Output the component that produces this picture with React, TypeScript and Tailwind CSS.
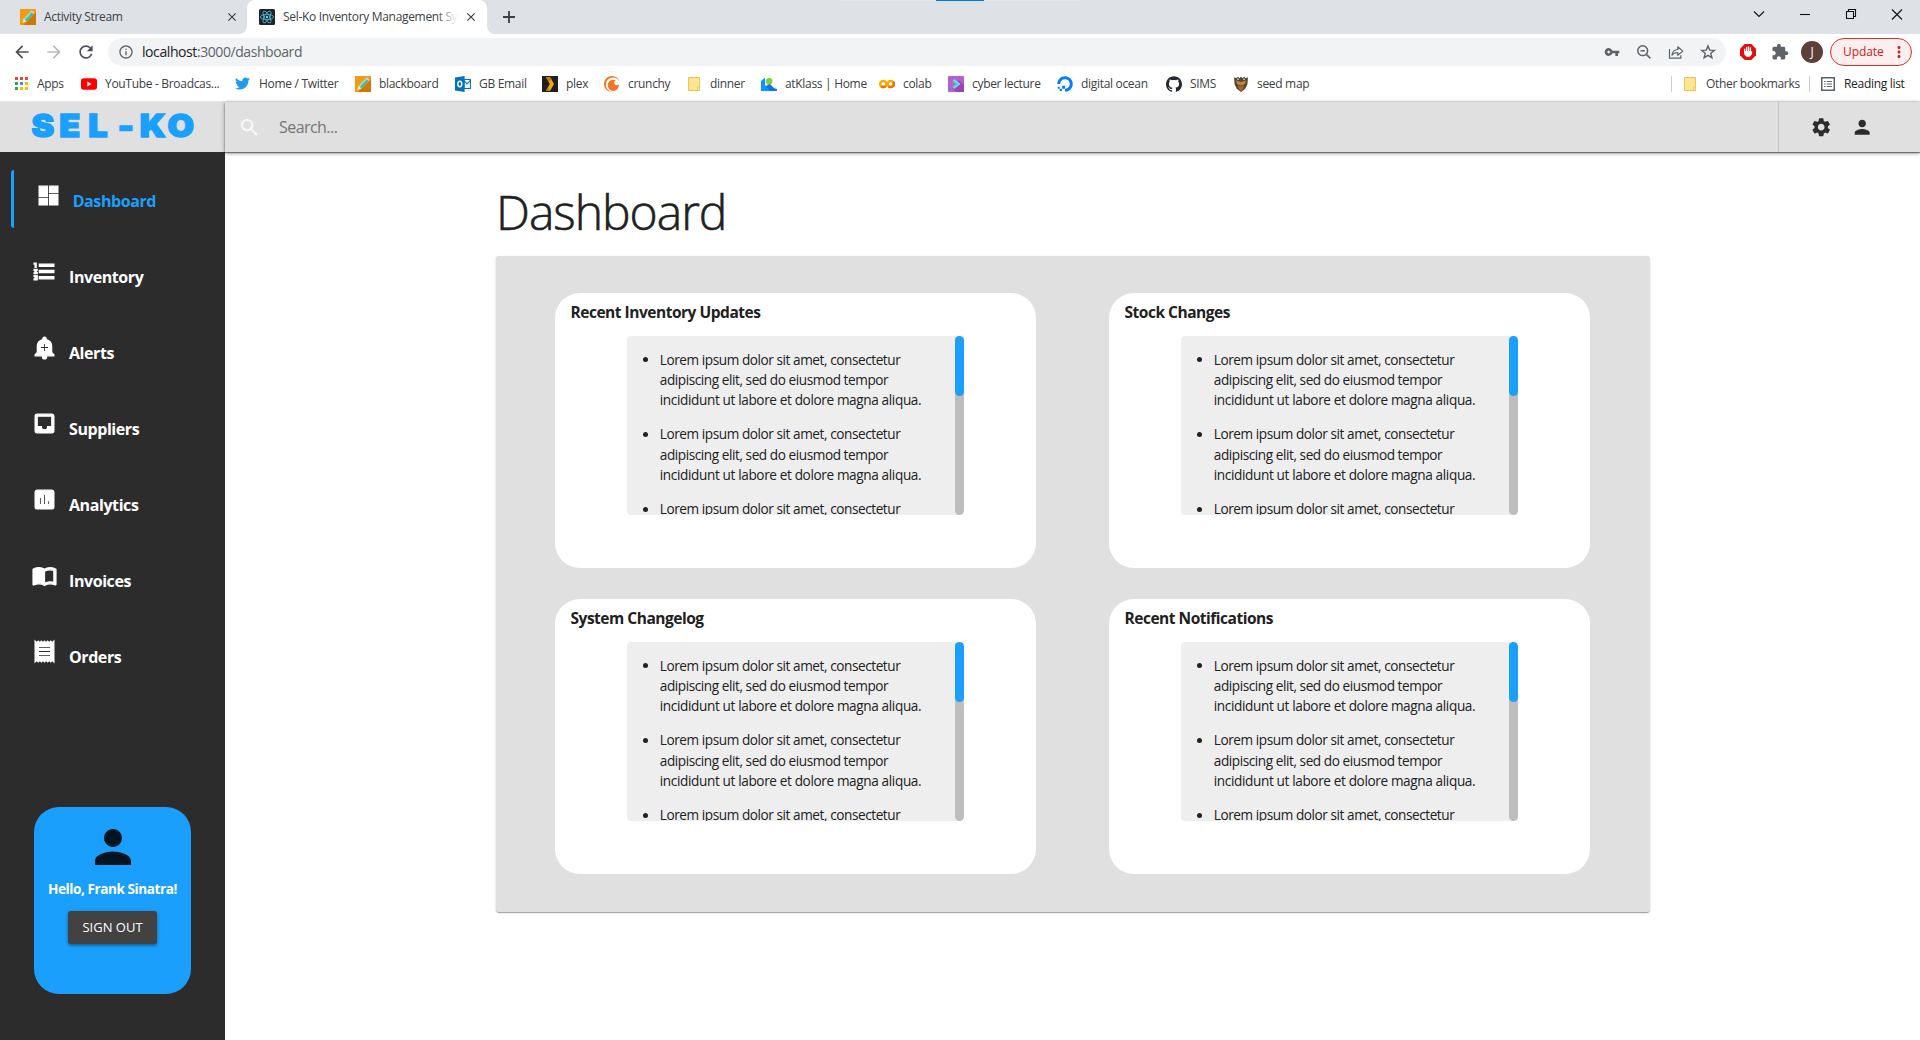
import React from "react";
import {
  MdAddAlert,
  MdArrowBack,
  MdArrowForward,
  MdAssessment,
  MdClose,
  MdDashboard,
  MdExtension,
  MdFormatListNumbered,
  MdImportContacts,
  MdInbox,
  MdInfoOutline,
  MdMoreVert,
  MdPerson,
  MdReceipt,
  MdRefresh,
  MdSearch,
  MdSettings,
  MdVpnKey,
} from "react-icons/md";
import { FaDigitalOcean, FaTwitter } from "react-icons/fa";
import { SiCrunchyroll, SiGithub } from "react-icons/si";

function PencilIcon() {
  return (
    <svg width="16" height="16" viewBox="0 0 16 16">
      <rect width="16" height="16" fill="#f79a12" />
      <path d="M16 3v13H3z" fill="#cf7a04" />
      <path d="M10.6 2.2l3 2.9-7.2 7.5-2.9-2.9z" fill="#7fe3cf" />
      <path d="M12 3.6l-7 7.5 1.4 1.5 7.2-7.5z" fill="#3fb9ae" />
      <path d="M10.6 2.2l1-1 3 2.9-1 1z" fill="#f3c3dc" />
      <path d="M3.5 9.7l2.9 2.9L2.3 14z" fill="#fdeecb" />
    </svg>
  );
}

function ReactIcon() {
  return (
    <svg width="16" height="16" viewBox="0 0 16 16">
      <rect width="16" height="16" rx="1.5" fill="#20232a" />
      <g fill="none" stroke="#61dafb" strokeWidth="0.8" opacity="0.85">
        <ellipse cx="8" cy="8" rx="6.6" ry="2.6" />
        <ellipse cx="8" cy="8" rx="6.6" ry="2.6" transform="rotate(60 8 8)" />
        <ellipse cx="8" cy="8" rx="6.6" ry="2.6" transform="rotate(120 8 8)" />
      </g>
      <circle cx="8" cy="8" r="1.2" fill="#61dafb" />
    </svg>
  );
}

function AppsIcon() {
  const colors = ["#ea4335", "#ea4335", "#ea4335", "#34a853", "#4285f4", "#fbbc04", "#34a853", "#fbbc04", "#fbbc04"];
  return (
    <svg width="13" height="13" viewBox="0 0 13 13" className="ml-[2px]">
      {colors.map((c, i) => (
        <rect key={i} x={(i % 3) * 5} y={Math.floor(i / 3) * 5} width="3" height="3" fill={c} />
      ))}
    </svg>
  );
}

function YoutubeIcon() {
  return (
    <svg width="16" height="16" viewBox="0 0 16 16">
      <rect y="2.2" width="16" height="11.6" rx="2.8" fill="#f00" />
      <path d="M6.3 5.6v4.8L10.6 8z" fill="#fff" />
    </svg>
  );
}

function OutlookIcon() {
  return (
    <svg width="16" height="16" viewBox="0 0 16 16">
      <path d="M9 3.5h6.4v9H9z" fill="#fff" stroke="#0072c6" strokeWidth="1.1" />
      <path d="M9 4.5l3 3.4 3.4-3.6" fill="none" stroke="#0072c6" strokeWidth="1.1" />
      <path d="M0 1.5L9.6 0v16L0 14.5z" fill="#0072c6" />
      <ellipse cx="4.8" cy="8" rx="2" ry="2.7" fill="none" stroke="#fff" strokeWidth="1.4" />
    </svg>
  );
}

function PlexIcon() {
  return (
    <svg width="16" height="16" viewBox="0 0 16 16">
      <rect width="16" height="16" fill="#1f1f1f" />
      <path d="M4 1.3h4.2L12 8l-3.8 6.7H4L7.8 8z" fill="#f0a810" />
      <path d="M4 1.3h4.2L9.6 3.8 6.4 5.6zM4 14.7L6 11.2l2.2 3.5z" fill="#c4770d" />
    </svg>
  );
}

function FolderIcon() {
  return (
    <svg width="16" height="16" viewBox="0 0 16 16">
      <path d="M2.5 1.5h11v13h-11z" fill="#ffe593" stroke="#e9c64f" />
      <path d="M11.5 11h2v3.5h-2z" fill="#ffe593" stroke="#e9c64f" strokeWidth="0.8" />
    </svg>
  );
}

function KlassIcon() {
  return (
    <svg width="16" height="16" viewBox="0 0 16 16">
      <path d="M0 5L4 1.5v8L16 13v2H0z" fill="#0a96ff" />
      <path d="M5 10l3.5-2.5L16 15H9z" fill="#1273e6" />
      <circle cx="8.2" cy="5.2" r="3.2" fill="#7ed037" />
    </svg>
  );
}

function ColabIcon() {
  return (
    <svg width="16" height="16" viewBox="0 0 16 16" fill="none" strokeWidth="2.5">
      <circle cx="4.3" cy="8" r="3.1" stroke="#f9ab00" />
      <path d="M2.1 10.2A3.1 3.1 0 0 0 6.5 10.2" stroke="#e8710a" />
      <circle cx="11.7" cy="8" r="3.1" stroke="#f9ab00" />
      <path d="M13.9 5.8A3.1 3.1 0 0 1 9.5 10.2" stroke="#e8710a" />
    </svg>
  );
}

function CyberIcon() {
  return (
    <svg width="16" height="16" viewBox="0 0 16 16">
      <rect width="16" height="16" rx="1" fill="#b65fd0" />
      <path d="M11 4l5 5v7H8l-3.5-3.5z" fill="#9a44b5" />
      <path d="M5.5 3.7L11 8l-5.5 4.3" fill="none" stroke="#5fe0ff" strokeWidth="2" />
      <path d="M5 5.5L8.5 8 5 10.5" fill="none" stroke="#50e070" strokeWidth="1.2" />
    </svg>
  );
}

function SeedIcon() {
  return (
    <svg width="16" height="16" viewBox="0 0 16 16">
      <path
        d="M1 1.5l2.500.5L5 .8l1.500 1.400L8 .5l1.500 1.700L11 .8l1.500 1.200 2.500-.5-.6 7L12 13l-4 3-4-3L1.600 8.500z"
        fill="#54483a"
      />
      <path d="M3 4.5l5 1.5 5-1.5-1 3.500L8 9.500 4 8z" fill="#c98236" />
      <path d="M5 9L8 10.500 11 9 10 13 8 15l-2-2z" fill="#a8682a" />
      <circle cx="5" cy="3.2" r=".9" fill="#b9c3c9" />
      <circle cx="11" cy="3.2" r=".9" fill="#b9c3c9" />
    </svg>
  );
}

function ReadingListIcon() {
  return (
    <svg width="14" height="14" viewBox="0 0 14 14" fill="none" stroke="#5f6368">
      <rect x=".75" y=".75" width="12.5" height="12.5" strokeWidth="1.5" />
      <path d="M3 4.500h1.600M3 7h1.600M3 9.500h1.600M5.700 4.500H11M5.700 7H11M5.700 9.500H11" strokeWidth="1.2" />
    </svg>
  );
}

function ZoomOutIcon() {
  return (
    <svg width="16" height="16" viewBox="0 0 16 16" fill="none" stroke="#5f6368" strokeWidth="1.5">
      <circle cx="6.7" cy="6.7" r="4.9" />
      <path d="M10.400 10.400l4 4M4.500 6.700h4.400" />
    </svg>
  );
}

function ShareIcon() {
  return (
    <svg width="16" height="16" viewBox="0 0 16 16" fill="none" stroke="#5f6368" strokeWidth="1.2">
      <path d="M1.500 5v9.200h11.300v-3" />
      <path
        d="M4 11.200c.3-3.600 2.200-5.500 5.800-5.700V2.800l5 4.300-5 4.200V8.700C7 8.600 5.300 9.400 4 11.200z"
        strokeLinejoin="round"
      />
    </svg>
  );
}

function StarIcon() {
  return (
    <svg width="16" height="16" viewBox="0 0 16 16" fill="none" stroke="#5f6368" strokeWidth="1.4">
      <path d="M8 1.900l1.700 4.200 4.600.3-3.500 2.900 1.100 4.400L8 11.300l-3.900 2.400 1.100-4.400L1.700 6.400l4.600-.3z" />
    </svg>
  );
}

function BlockerIcon() {
  return (
    <svg width="16" height="16" viewBox="0 0 16 16">
      <path d="M4.700 0h6.600L16 4.700v6.600L11.300 16H4.700L0 11.300V4.700z" fill="#e40d0d" />
      <path
        d="M4.700 7.800V5.200M6.600 7V3.400M8.500 7V2.900M10.400 7V3.800"
        stroke="#fff"
        strokeWidth="1.3"
        strokeLinecap="round"
      />
      <path d="M4.050 7H11l1.300.8c-.2 2.700-1.300 5-3.900 5.200-2.700 0-4.350-2-4.350-4.500z" fill="#fff" />
    </svg>
  );
}

const bookmarks = [
  { label: "Apps", width: "w-[68px]", icon: <AppsIcon /> },
  { label: "YouTube - Broadcas...", width: "w-[154px]", icon: <YoutubeIcon /> },
  { label: "Home / Twitter", width: "w-[120px]", icon: <FaTwitter size={15} color="#1d9bf0" /> },
  { label: "blackboard", width: "w-[100px]", icon: <PencilIcon /> },
  { label: "GB Email", width: "w-[87px]", icon: <OutlookIcon /> },
  { label: "plex", width: "w-[62px]", icon: <PlexIcon /> },
  { label: "crunchy", width: "w-[82px]", icon: <SiCrunchyroll size={16} color="#f47521" /> },
  { label: "dinner", width: "w-[75px]", icon: <FolderIcon /> },
  { label: "atKlass | Home", width: "w-[118px]", icon: <KlassIcon /> },
  { label: "colab", width: "w-[69px]", icon: <ColabIcon /> },
  { label: "cyber lecture", width: "w-[109px]", icon: <CyberIcon /> },
  { label: "digital ocean", width: "w-[109px]", icon: <FaDigitalOcean size={16} color="#0080ff" /> },
  { label: "SIMS", width: "w-[67px]", icon: <SiGithub size={16} color="#24292f" /> },
  { label: "seed map", width: "w-[100px]", icon: <SeedIcon /> },
];

const navItems = [
  { label: "Inventory", Icon: MdFormatListNumbered },
  { label: "Alerts", Icon: MdAddAlert },
  { label: "Suppliers", Icon: MdInbox },
  { label: "Analytics", Icon: MdAssessment },
  { label: "Invoices", Icon: MdImportContacts },
  { label: "Orders", Icon: MdReceipt },
];

function TabStrip() {
  return (
    <div className="relative flex h-[34px] bg-[#dee1e6] text-[12px] tracking-[-0.32px] text-[#3c4043]">
      <div className="absolute left-[840px] top-0 h-px w-[240px] bg-[#e5e5e5]" />
      <div className="absolute left-[936px] top-0 h-px w-[48px] bg-[#0078d7]" />
      <div className="flex w-[247px] items-center pl-[20px]">
        <PencilIcon />
        <span className="ml-[8px] w-[181px]">Activity Stream</span>
        <MdClose size={14} />
      </div>
      <div className="relative flex w-[240px] items-center rounded-t-[8px] bg-white pl-[12px]">
        <svg className="absolute -left-[8px] bottom-0" width="8" height="8">
          <path d="M8 0v8H0a8 8 0 0 0 8-8z" fill="#fff" />
        </svg>
        <svg className="absolute -right-[8px] bottom-0" width="8" height="8">
          <path d="M0 0v8h8a8 8 0 0 1-8-8z" fill="#fff" />
        </svg>
        <ReactIcon />
        <div className="relative ml-[8px] w-[175px] overflow-hidden whitespace-nowrap">
          Sel-Ko Inventory Management Sy
          <div className="absolute inset-y-0 right-0 w-[20px] bg-linear-to-r from-white/10 to-white" />
        </div>
        <MdClose size={14} className="ml-[6px]" />
      </div>
      <svg className="ml-[16px] mt-[11px]" width="12" height="12" viewBox="0 0 12 12">
        <path d="M6 0v12M0 6h12" stroke="#3c4043" strokeWidth="1.8" />
      </svg>
      <svg
        className="ml-auto"
        width="172"
        height="28"
        viewBox="0 0 172 28"
        fill="none"
        stroke="#111"
        strokeWidth="1.1"
      >
        <path d="M6 11.500l5 5 5-5" />
        <path d="M52 14.500h10" />
        <path d="M98.500 11.500h7v7h-7zM100.500 11.500v-2h7v7h-2" />
        <path d="M144 9.500l10 10M154 9.500l-10 10" />
      </svg>
    </div>
  );
}

function Toolbar() {
  return (
    <div className="flex h-[36px] items-center bg-white">
      <div className="flex w-[108px] items-center pl-[12px] text-[#5f6368]">
        <MdArrowBack size={20} className="text-[#4d5156]" />
        <MdArrowForward size={20} className="ml-[12px] text-[#b8babd]" />
        <MdRefresh size={20} className="ml-[12px] text-[#4d5156]" />
      </div>
      <div className="flex h-[28px] w-[1618px] items-center rounded-full bg-[#f1f3f4] pl-[10px]">
        <MdInfoOutline size={16} color="#5f6368" />
        <span className="ml-[8px] text-[14px] leading-none tracking-[-0.42px] text-[#5f6368]">
          <span className="text-[#202124]">localhost</span>:3000/dashboard
        </span>
        <div className="ml-auto flex items-center gap-[16px] pr-[10px]">
          <MdVpnKey size={16} color="#5f6368" />
          <ZoomOutIcon />
          <ShareIcon />
          <StarIcon />
        </div>
      </div>
      <div className="ml-[14px] flex items-center">
        <BlockerIcon />
        <MdExtension size={18} color="#5f6368" className="ml-[15px]" />
        <span className="ml-[12px] flex size-[22px] items-center justify-center rounded-full bg-[#5d4037] text-[12px] text-white">
          J
        </span>
        <div className="ml-[7px] flex h-[28px] w-[82px] items-center rounded-full border border-[#d93025] bg-[#fcefee] pl-[12px] text-[12px] tracking-[-0.1px] text-[#c5221f]">
          Update
          <MdMoreVert size={18} className="ml-[6px]" />
        </div>
      </div>
    </div>
  );
}

function BookmarksBar() {
  return (
    <div className="flex h-[32px] items-center border-b border-[#e4e5e7] bg-white pb-[4px] pl-[13px] text-[12px] leading-none tracking-[-0.31px] text-[#3c4043]">
      {bookmarks.map((b) => (
        <div key={b.label} className={`flex shrink-0 items-center whitespace-nowrap ${b.width}`}>
          <span className="flex w-[16px] shrink-0">{b.icon}</span>
          <span className="ml-[8px]">{b.label}</span>
        </div>
      ))}
      <div className="ml-auto flex items-center pr-[14px]">
        <div className="h-[16px] w-px bg-[#cbcdd1]" />
        <div className="ml-[10px] flex w-[127px] items-center">
          <FolderIcon />
          <span className="ml-[8px] whitespace-nowrap">Other bookmarks</span>
        </div>
        <div className="h-[16px] w-px bg-[#cbcdd1]" />
        <div className="ml-[11px] flex items-center text-[#202124]">
          <ReadingListIcon />
          <span className="ml-[9px] w-[62px] whitespace-nowrap">Reading list</span>
        </div>
      </div>
    </div>
  );
}

function Header() {
  return (
    <header className="flex h-[50px] bg-[#e0e0e0]">
      <div className="flex w-[225px] justify-center pt-[4px] pr-[2px] font-['Inter',sans-serif] text-[31px] leading-[40px] font-black text-[#1aa0fc]">
        {"SEL-KO".split("").map((ch, i) => (
          <span key={i} className="w-[27.6px] scale-x-110 text-center [-webkit-text-stroke:1.5px_#1aa0fc]">
            {ch}
          </span>
        ))}
      </div>
      <div className="relative z-10 flex flex-1 bg-[#e0e0e0] shadow-[0_1px_1px_rgba(0,0,0,0.4),0_1px_4px_rgba(0,0,0,0.45)]">
        <div className="flex w-[1554px] items-center border-r border-[#c4c4c4] pl-[13px]">
          <MdSearch size={23} color="#fafafa" />
          <span className="ml-[18px] text-[16px] tracking-[-0.55px] text-[#757575]">Search...</span>
        </div>
        <div className="flex items-center gap-[19.5px] pl-[30.5px] text-[#2c2c2c]">
          <MdSettings size={22.4} />
          <MdPerson size={22.4} />
        </div>
      </div>
    </header>
  );
}

function Sidebar() {
  return (
    <aside className="flex w-[225px] shrink-0 flex-col bg-[#2c2c2c] pt-[18px] font-bold">
      <div className="ml-[11px] flex h-[58px] rounded-l-[3px] border-l-[3px] border-[#1aa0fc] pl-[21.5px]">
        <MdDashboard size={25} color="#fff" strokeWidth={1.2} className="mt-[12.5px] [&>path[fill=none]]:stroke-none" />
        <span className="mt-[19px] ml-[12.2px] text-[16px] leading-[24px] tracking-[-0.42px] text-[#1aa0fc]">
          Dashboard
        </span>
      </div>
      {navItems.map(({ label, Icon }) => (
        <div key={label} className="mt-[18px] flex h-[58px] pl-[31.5px]">
          <Icon size={25} color="#fff" strokeWidth={1.2} className="mt-[12.5px] [&>path[fill=none]]:stroke-none" />
          <span className="mt-[19px] ml-[12.5px] text-[16px] leading-[24px] tracking-[-0.42px] text-white">
            {label}
          </span>
        </div>
      ))}
      <div className="mt-[123px] ml-[34px] flex h-[187px] w-[157px] flex-col items-center rounded-[25px] bg-[#1aa0fc]">
        <MdPerson size={54} className="mt-[13px] text-black/87" />
        <span className="mt-[5px] text-[13.6px] leading-[20px] tracking-[-0.44px] whitespace-nowrap text-white">
          Hello, Frank Sinatra!
        </span>
        <button className="mt-[12px] h-[33px] w-[89px] rounded-[3px] bg-[#424242] text-[13px] font-medium text-white shadow-[0_2px_2px_rgba(0,0,0,0.2),0_1px_4px_rgba(0,0,0,0.25)]">
          SIGN OUT
        </button>
      </div>
    </aside>
  );
}

function FeedItem() {
  return (
    <li className="relative mb-[13.6px] pl-[32.8px] text-[13.6px] leading-[20.4px] tracking-[-0.43px] whitespace-nowrap">
      <span className="absolute top-[7.5px] left-[16px] size-[5px] rounded-full bg-[#212121]" />
      Lorem ipsum dolor sit amet, consectetur
      <br />
      adipiscing elit, sed do eiusmod tempor
      <br />
      <span className="tracking-[-0.37px]">incididunt ut labore et dolore magna aliqua.</span>
    </li>
  );
}

function Card({ title }: { title: string }) {
  return (
    <section className="h-[275px] rounded-[25px] bg-white pt-[7px]">
      <h2 className="ml-[15.5px] text-[15.5px] leading-[24px] font-bold tracking-[-0.48px]">{title}</h2>
      <div className="mt-[12px] ml-[72px] flex h-[179px] w-[337px] overflow-hidden rounded-[4px] bg-[#eee]">
        <ul className="flex-1 pt-[13.6px]">
          <FeedItem />
          <FeedItem />
          <FeedItem />
        </ul>
        <div className="w-[9px] rounded-full bg-[#bdbdbd]">
          <div className="h-[60px] rounded-full bg-[#1aa0fc]" />
        </div>
      </div>
    </section>
  );
}

export default function App() {
  return (
    <div className="flex h-[1040px] w-[1920px] flex-col overflow-hidden bg-white font-['Open_Sans',sans-serif] text-[#212121]">
      <TabStrip />
      <Toolbar />
      <BookmarksBar />
      <Header />
      <div className="flex flex-1">
        <Sidebar />
        <main className="pt-[32px] pl-[271px]">
          <h1 className="text-[48px] leading-[56px] font-light tracking-[-1px] [-webkit-text-stroke:0.6px_#212121]">
            Dashboard
          </h1>
          <div className="mt-[16px] grid h-[656px] w-[1154px] grid-cols-[481px_481px] content-start gap-x-[73px] gap-y-[31px] rounded-[3px] bg-[#e0e0e0] px-[59px] pt-[37px] shadow-[0_2px_1px_-1px_rgba(0,0,0,0.2),0_1px_1px_rgba(0,0,0,0.14),0_1px_3px_rgba(0,0,0,0.12)]">
            <Card title="Recent Inventory Updates" />
            <Card title="Stock Changes" />
            <Card title="System Changelog" />
            <Card title="Recent Notifications" />
          </div>
        </main>
      </div>
    </div>
  );
}
